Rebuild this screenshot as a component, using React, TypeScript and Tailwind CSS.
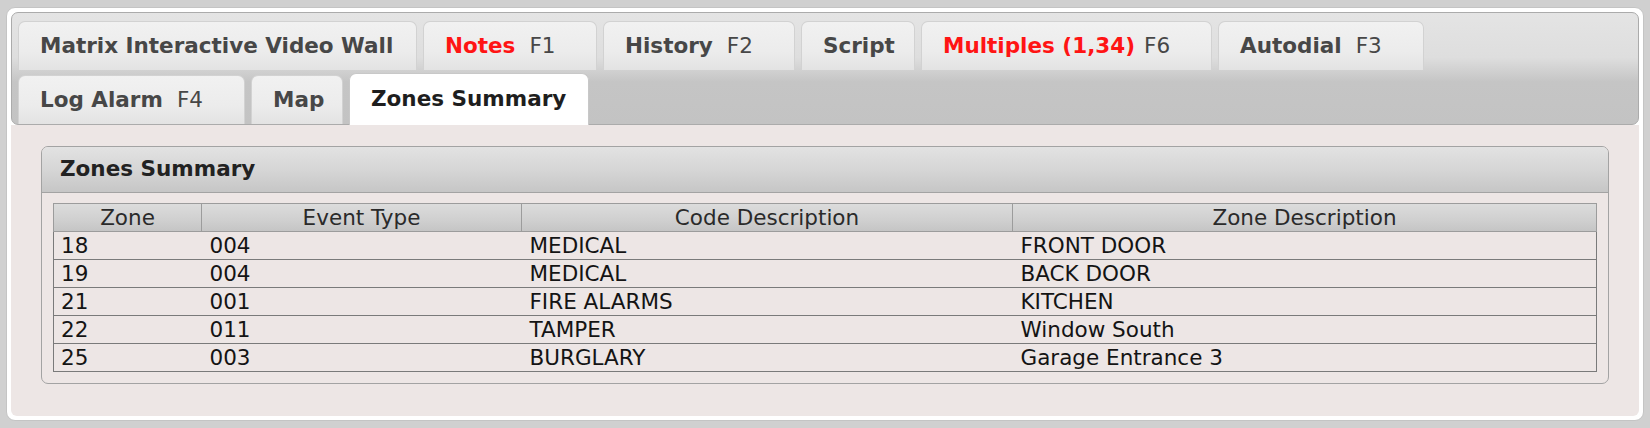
const tabsRow1 = [
  { label: "Matrix Interactive Video Wall", w: "w-[399px]" },
  { label: "Notes", key: "F1", red: true, w: "w-[174px]" },
  { label: "History", key: "F2", w: "w-[192px]" },
  { label: "Script", w: "w-[114px]" },
  { label: "Multiples (1,34)", key: "F6", red: true, w: "w-[291px]", gap: "ml-[9px]" },
  { label: "Autodial", key: "F3", w: "w-[206px]" },
];

const tabsRow2 = [
  { label: "Log Alarm", key: "F4", w: "w-[227px]" },
  { label: "Map", w: "w-[92px]" },
  { label: "Zones Summary", active: true, w: "w-[240px]" },
];

const rows = [
  ["18", "004", "MEDICAL", "FRONT DOOR"],
  ["19", "004", "MEDICAL", "BACK DOOR"],
  ["21", "001", "FIRE ALARMS", "KITCHEN"],
  ["22", "011", "TAMPER", "Window South"],
  ["25", "003", "BURGLARY", "Garage Entrance 3"],
];

type Tab = { label: string; key?: string; red?: boolean; active?: boolean; w: string; gap?: string };

function TabButton({ tab }: { tab: Tab }) {
  return (
    <div
      className={`${tab.w} flex items-center pl-[21px] whitespace-nowrap rounded-t-[7px] border border-b-0 ${
        tab.active
          ? "h-[52px] -mb-px bg-white border-[#c8c8c8] text-[#1e1e1e]"
          : "h-[49px] border-[#d2d2d2] bg-[linear-gradient(to_bottom,#f1f1f1_0%,#ececec_60%,#e3e3e3_100%)] text-[#474747]"
      }`}
    >
      <span className={`font-bold ${tab.red ? "text-[#ff1414]" : ""}`}>{tab.label}</span>
      {tab.key && <span className={`${tab.gap ?? "ml-[14px]"} font-normal text-[#474747]`}>{tab.key}</span>}
    </div>
  );
}

export default function App() {
  return (
    <div className="w-[1650px] h-[428px] bg-[#d0d0d0] px-[6px] py-[7px] font-['DejaVu_Sans',Verdana,sans-serif]">
      <div className="h-full bg-white border border-[#c4c4c4] rounded-[9px] p-[4px] flex flex-col">
        {/* tab strip */}
        <div className="h-[113px] border border-[#ababab] rounded-[7px] bg-[linear-gradient(to_bottom,#e4e4e4_0%,#dedede_40%,#c5c5c5_62%,#c3c3c3_100%)] px-[6px] pt-[8px] flex flex-col gap-[3px] text-[21.5px]">
          <div className="flex gap-[6px]">
            {tabsRow1.map((t) => (
              <TabButton key={t.label} tab={t} />
            ))}
          </div>
          <div className="flex gap-[6px] items-end">
            {tabsRow2.map((t) => (
              <TabButton key={t.label} tab={t} />
            ))}
          </div>
        </div>

        {/* tab content */}
        <div className="flex-1 bg-[#ede6e5] rounded-b-[6px] px-[30px] pt-[21px]">
          <div className="border border-[#a3a3a3] rounded-[7px] overflow-hidden">
            <div className="h-[46px] border-b border-[#a3a3a3] bg-[linear-gradient(to_bottom,#e2e2e2_0%,#d6d6d6_50%,#c6c6c6_100%)] flex items-center pl-[18px] text-[21.5px] font-bold text-[#222]">
              Zones Summary
            </div>
            <div className="px-[11px] pt-[10px] pb-[11px]">
              <table className="w-full border-collapse text-[21.5px] leading-[27px] text-[#141414]">
                <thead>
                  <tr className="bg-[linear-gradient(to_bottom,#dcdcdc_0%,#cfcfcf_60%,#c4c4c4_100%)] text-[#2a2a2a]">
                    <th className="w-[148px] h-[28px] font-normal border border-[#9c9c9c]">Zone</th>
                    <th className="w-[320px] font-normal border border-[#9c9c9c]">Event Type</th>
                    <th className="w-[491px] font-normal border border-[#9c9c9c]">Code Description</th>
                    <th className="font-normal border border-[#9c9c9c]">Zone Description</th>
                  </tr>
                </thead>
                <tbody>
                  {rows.map((r) => (
                    <tr key={r[0]} className="h-[28px]">
                      <td className="border-y border-l border-[#7a7a7a] pl-[7px]">{r[0]}</td>
                      <td className="border-y border-[#7a7a7a] pl-[8px]">{r[1]}</td>
                      <td className="border-y border-[#7a7a7a] pl-[8px]">{r[2]}</td>
                      <td className="border-y border-r border-[#7a7a7a] pl-[8px]">{r[3]}</td>
                    </tr>
                  ))}
                </tbody>
              </table>
            </div>
          </div>
        </div>
      </div>
    </div>
  );
}
